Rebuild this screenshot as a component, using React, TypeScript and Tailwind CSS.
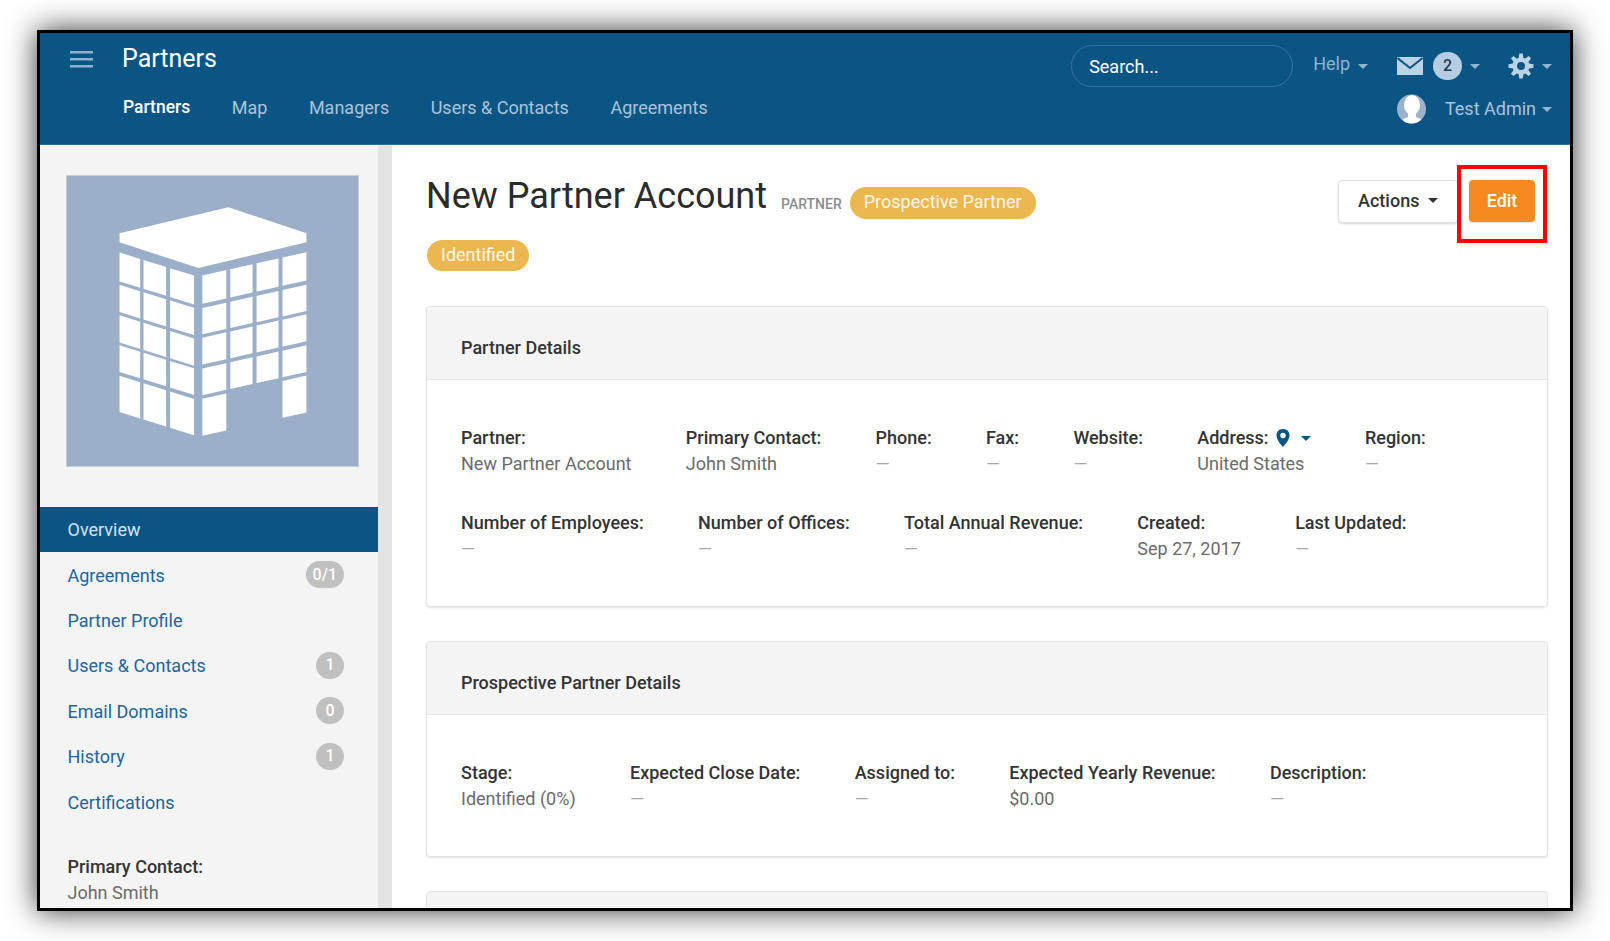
const navLinks = ['Map', 'Managers', 'Users & Contacts', 'Agreements'];

const sideLinks = [
    { label: 'Agreements', count: '0/1' },
    { label: 'Partner Profile' },
    { label: 'Users & Contacts', count: '1' },
    { label: 'Email Domains', count: '0' },
    { label: 'History', count: '1' },
    { label: 'Certifications' },
];

const detailFields = [
    { label: 'Partner:', value: 'New Partner Account' },
    { label: 'Primary Contact:', value: 'John Smith' },
    { label: 'Phone:', value: '—' },
    { label: 'Fax:', value: '—' },
    { label: 'Website:', value: '—' },
    { label: 'Address:', value: 'United States', address: true },
    { label: 'Region:', value: '—' },
    { label: 'Number of Employees:', value: '—' },
    { label: 'Number of Offices:', value: '—' },
    { label: 'Total Annual Revenue:', value: '—' },
    { label: 'Created:', value: 'Sep 27, 2017' },
    { label: 'Last Updated:', value: '—' },
];

const prospectFields = [
    { label: 'Stage:', value: 'Identified (0%)' },
    { label: 'Expected Close Date:', value: '—' },
    { label: 'Assigned to:', value: '—' },
    { label: 'Expected Yearly Revenue:', value: '$0.00' },
    { label: 'Description:', value: '—' },
];

function Caret({ className }: { className: string }) {
    return <span className={`inline-block w-0 h-0 border-x-[5px] border-x-transparent border-t-[5px] ${className}`} />;
}

function GearIcon() {
    const teeth = [0, 45, 90, 135, 180, 225, 270, 315];
    return (
        <svg viewBox="0 0 26 26" className="ml-[28px] w-[26px] h-[26px]" fill="#bcd3e6">
            {teeth.map((deg) => (
                <polygon key={deg} points="10.600,5 11.300,0.500 14.700,0.500 15.400,5" transform={`rotate(${deg} 13 13)`} />
            ))}
            <circle cx="13" cy="13" r="6.300" fill="none" stroke="#bcd3e6" strokeWidth="4.600" />
        </svg>
    );
}

function BuildingArt() {
    const leftCols = [[178, 240], [250, 318], [330, 402]];
    const leftRows = [[246, 333], [343, 425], [435, 517], [525, 605], [617, 726]];
    const rightCols = [[427, 499], [511, 578], [590, 656], [668, 740]];
    const rightRows = [[245, 330], [343, 422], [432, 513], [525, 605], [616, 727]];
    const leftY = (base: number, x: number) => base + 0.31 * (x - 178);
    const rightY = (base: number, x: number) => base + 0.224 * (740 - x);

    return (
        <svg viewBox="20 16 875 872" className="w-full h-full block" fill="#ffffff">
            <polygon points="178,188 505,110 740,188 740,215 415,293 178,215" />
            {leftRows.map(([top, bottom], r) =>
                leftCols.map(([a, b], c) => (
                    <polygon
                        key={`l${r}${c}`}
                        points={`${a},${leftY(top, a)} ${b},${leftY(top, b)} ${b},${leftY(bottom, b)} ${a},${leftY(bottom, a)}`}
                    />
                ))
            )}
            {rightRows.map(([top, bottom], r) =>
                rightCols.map(([a, b], c) =>
                    r === 4 && (c === 1 || c === 2) ? null : (
                        <polygon
                            key={`r${r}${c}`}
                            points={`${a},${rightY(top, a)} ${b},${rightY(top, b)} ${b},${rightY(bottom, b)} ${a},${rightY(bottom, a)}`}
                        />
                    )
                )
            )}
        </svg>
    );
}

function Field({ label, value, address }: { label: string; value: string; address?: boolean }) {
    return (
        <div>
            <div className="h-[26px] leading-[26px] font-medium text-[#333333] flex items-center">
                {label}
                {address && (
                    <>
                        <svg viewBox="0 0 14 18" className="w-[14px] h-[18px] ml-[7px]">
                            <path d="M7 0C3 0 .5 2.8.5 6.4.5 10.5 5 15.500 7 18c2-2.500 6.500-7.500 6.500-11.600C13.500 2.800 11 0 7 0z" fill="#0b5585" />
                            <circle cx="7" cy="6.500" r="2.700" fill="#ffffff" />
                        </svg>
                        <Caret className="ml-[11px] border-t-[#0b5585]" />
                    </>
                )}
            </div>
            <div className={`h-[26px] leading-[26px] ${value === '—' ? 'text-[#a8a8a8]' : 'text-[#6b6b6b]'}`}>{value}</div>
        </div>
    );
}

function Panel({ title, fields }: { title: string; fields: { label: string; value: string; address?: boolean }[] }) {
    return (
        <section className="border border-[#e3e3e3] rounded-[4px] shadow-[0_1px_2px_rgba(0,0,0,0.12)] mb-[34px]">
            <div className="h-[73px] bg-[#f4f4f4] border-b border-[#e6e6e6] rounded-t-[4px] px-[34px] pt-[8px] flex items-center font-medium text-[#333333]">
                {title}
            </div>
            <div className="pl-[34px] pr-[20px] pt-[45px] pb-[44px] flex flex-wrap gap-x-[54.300px] gap-y-[33px]">
                {fields.map((f) => (
                    <Field key={f.label} {...f} />
                ))}
            </div>
        </section>
    );
}

export default function App() {
    return (
        <div className="w-[1610px] h-[941px] bg-white pt-[30px] pl-[37px] overflow-hidden font-['Roboto',sans-serif] text-[18px]">
            <div className="w-[1536px] h-[881px] box-border border-[3px] border-black shadow-[0_0_28px_rgba(0,0,0,0.8)] flex flex-col overflow-hidden">
                <header className="h-[112px] shrink-0 bg-[#0b5585] flex justify-between border-b border-[#2f6f9c]">
                    <div className="pl-[30px]">
                        <div className="flex items-center h-[50px] mt-[1px]">
                            <svg viewBox="0 0 23 17" className="w-[23px] h-[17px]" fill="#8fb3cf">
                                <rect width="23" height="2.500" />
                                <rect y="7" width="23" height="2.500" />
                                <rect y="14" width="23" height="2.500" />
                            </svg>
                            <span className="ml-[29px] text-[25px] text-white">Partners</span>
                        </div>
                        <nav className="ml-[53px] mt-[3px] h-[40px] flex items-center gap-[41.500px] text-[#a9c4da]">
                            <span className="text-white font-medium text-[17.500px]">Partners</span>
                            {navLinks.map((l) => (
                                <span key={l}>{l}</span>
                            ))}
                        </nav>
                    </div>
                    <div className="pr-[18px] text-[#a9c4da]">
                        <div className="flex items-center h-[42px] mt-[12px]">
                            <div className="w-[222px] h-[42px] rounded-full border border-[#36729e] flex items-center pl-[17px] pt-[1px] text-white">
                                Search...
                            </div>
                            <span className="ml-[20px] text-[#8fb3cf] -mt-[6px]">Help</span>
                            <Caret className="ml-[8px] border-t-[#8fb3cf]" />
                            <svg viewBox="0 0 26 18" className="ml-[29px] w-[26px] h-[18px]">
                                <rect width="26" height="18" fill="#bcd3e6" />
                                <path d="M0.500 1l12.500 10L25.500 1" fill="none" stroke="#0b5585" strokeWidth="2" />
                            </svg>
                            <span className="ml-[10px] w-[29px] h-[28px] rounded-full bg-[#b4cde2] text-[#1d3a52] font-medium text-[16px] flex items-center justify-center">
                                2
                            </span>
                            <Caret className="ml-[8px] border-t-[#8fb3cf]" />
                            <GearIcon />
                            <Caret className="ml-[8px] border-t-[#8fb3cf]" />
                        </div>
                        <div className="flex items-center justify-end h-[30px] mt-[7px]">
                            <svg viewBox="0 0 29 30" className="w-[29px] h-[30px]">
                                <defs>
                                    <clipPath id="avatar-clip">
                                        <circle cx="14.500" cy="15" r="14.500" />
                                    </clipPath>
                                </defs>
                                <circle cx="14.500" cy="15" r="14.500" fill="#9db3cb" />
                                <g clipPath="url(#avatar-clip)" fill="#ffffff">
                                    <ellipse cx="15" cy="11" rx="8" ry="10" />
                                    <path d="M11 18h8v5l5 2v6H6v-6l5-2z" />
                                </g>
                            </svg>
                            <span className="ml-[19px] mr-[6px] -mt-[2px]">Test Admin</span>
                            <Caret className="border-t-[#8fb3cf]" />
                        </div>
                    </div>
                </header>

                <div className="flex flex-1 min-h-0">
                    <aside className="w-[338px] shrink-0 bg-[#f4f4f4] pt-[30px]">
                        <div className="ml-[26px] w-[293px] h-[292px] border border-[#cccccc] bg-[#9bb0c8]">
                            <BuildingArt />
                        </div>
                        <ul className="mt-[40px]">
                            <li className="h-[45px] bg-[#0b5585] pl-[27.500px] flex items-center text-[#d5e3ee]">Overview</li>
                            {sideLinks.map((l) => (
                                <li key={l.label} className="h-[45.400px] pl-[27.500px] pr-[34px] flex items-center justify-between text-[#22659b]">
                                    <span className="mt-[1px]">{l.label}</span>
                                    {l.count && (
                                        <span className="min-w-[28px] h-[27px] px-[7px] rounded-full bg-[#c0c0c0] text-white font-medium text-[16px] flex items-center justify-center">
                                            {l.count}
                                        </span>
                                    )}
                                </li>
                            ))}
                        </ul>
                        <div className="mt-[30px] pl-[27.500px]">
                            <div className="h-[26px] leading-[26px] font-medium text-[#333333]">Primary Contact:</div>
                            <div className="h-[26px] leading-[26px] text-[#6b6b6b]">John Smith</div>
                        </div>
                    </aside>
                    <div className="w-[14px] shrink-0 bg-[#e4e4e4]" />
                    <main className="flex-1 min-w-0 bg-white pl-[34px] pr-[22px] pt-[30px] overflow-hidden">
                        <div className="flex justify-between items-start h-[131px] pr-[13px]">
                            <div>
                                <div className="flex items-center h-[42px]">
                                    <h1 className="text-[36px] text-[#2b2b2b]">New Partner Account</h1>
                                    <span className="ml-[14px] mt-[16px] text-[14px] font-medium text-[#8c8c8c]">PARTNER</span>
                                    <span className="ml-[8px] mt-[13px] h-[32px] px-[14px] pb-[2px] rounded-full bg-[#ebb850] text-[#fdf6e6] flex items-center">
                                        Prospective Partner
                                    </span>
                                </div>
                                <span className="mt-[23px] ml-[1px] inline-flex h-[31px] px-[14px] pb-[2px] rounded-full bg-[#ebb850] text-[#fdf6e6] items-center">
                                    Identified
                                </span>
                            </div>
                            <div className="flex items-start mt-[5px]">
                                <button className="w-[120px] h-[43px] border border-[#e0e0e0] rounded-[4px] bg-white shadow-[0_1px_2px_rgba(0,0,0,0.15)] font-medium text-[#333333] flex items-center gap-[9px] pl-[19px] pb-[3px]">
                                    Actions
                                    <Caret className="border-t-[#333333]" />
                                </button>
                                <div className="relative ml-[11px]">
                                    <button className="block w-[66px] h-[42px] rounded-[4px] bg-[#f68a1f] text-white font-medium pb-[2px] shadow-[0_1px_2px_rgba(0,0,0,0.15)]">
                                        Edit
                                    </button>
                                    <div className="absolute -left-[12px] -right-[12px] -top-[15px] -bottom-[21px] border-[4px] border-[#ff0000]" />
                                </div>
                            </div>
                        </div>
                        <Panel title="Partner Details" fields={detailFields} />
                        <Panel title="Prospective Partner Details" fields={prospectFields} />
                        <section className="border border-[#e3e3e3] rounded-t-[4px] h-[73px] bg-[#f4f4f4]" />
                    </main>
                </div>
            </div>
        </div>
    );
}
